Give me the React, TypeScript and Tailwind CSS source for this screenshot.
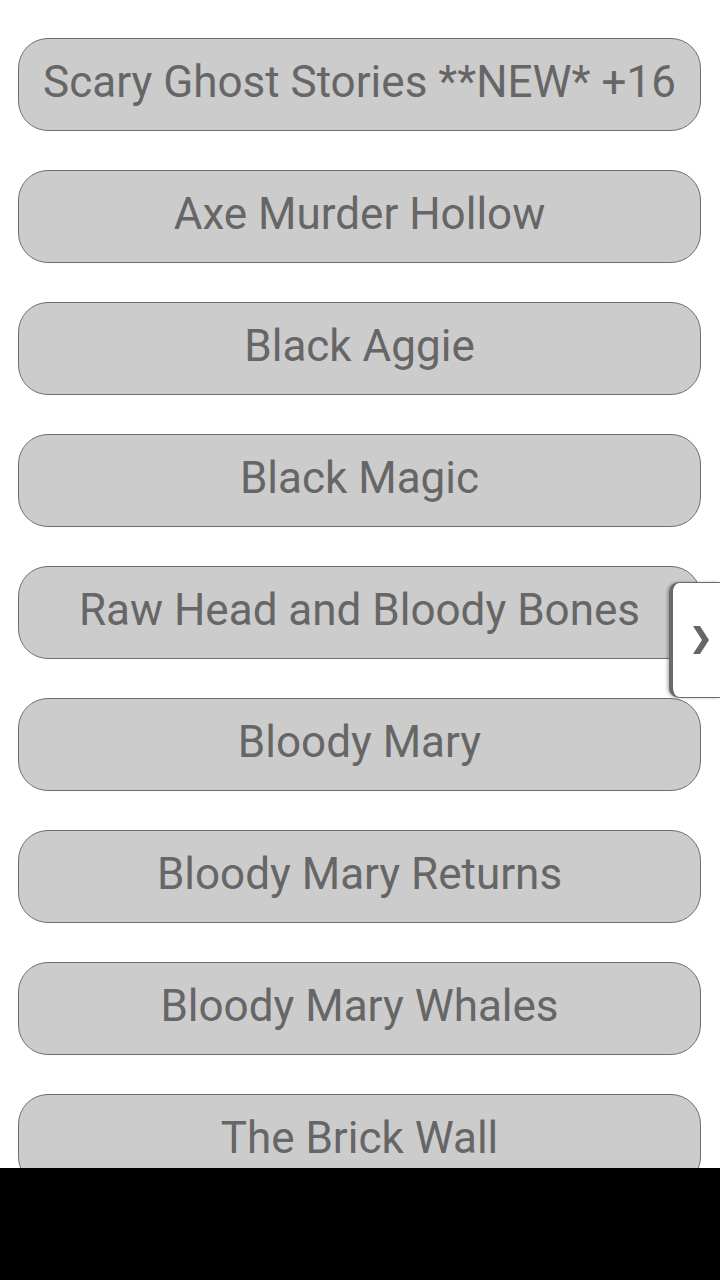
import React from "react";

const stories = [
  "Scary Ghost Stories **NEW* +16",
  "Axe Murder Hollow",
  "Black Aggie",
  "Black Magic",
  "Raw Head and Bloody Bones",
  "Bloody Mary",
  "Bloody Mary Returns",
  "Bloody Mary Whales",
  "The Brick Wall",
];

const App: React.FC = () => {
  return (
    <div className="flex h-[1280px] w-[720px] flex-col bg-white">
      {/* List */}
      <main className="relative h-[1168px] overflow-hidden bg-white">
        <div className="flex flex-col gap-[39px] px-[18px] pt-[38px] pr-[19px]">
          {stories.map((title) => (
            <button
              key={title}
              className="flex h-[93px] w-full shrink-0 items-center justify-center whitespace-nowrap rounded-[30px] border border-[#6f6f6f] bg-[#cccccc] pb-[5px] font-['Roboto',sans-serif] text-[44px] leading-none text-[#666666]"
            >
              {title}
            </button>
          ))}
        </div>

        {/* Side drawer tab */}
        <div className="absolute right-0 top-[582px] flex h-[116px] w-[51px] items-center justify-center rounded-l-[10px] border-l-[4px] border-y border-[#6a6a6a] bg-white shadow-[-2px_0_3px_rgba(0,0,0,0.25)]">
          <svg width="18" height="28" viewBox="0 0 18 28" className="ml-[6px]">
            <polygon points="2,0 9,0 18,14 9,28 2,28 11,14" fill="#666666" />
          </svg>
        </div>
      </main>

      {/* Nav bar */}
      <footer className="h-[112px] bg-black" />
    </div>
  );
};

export default App;
